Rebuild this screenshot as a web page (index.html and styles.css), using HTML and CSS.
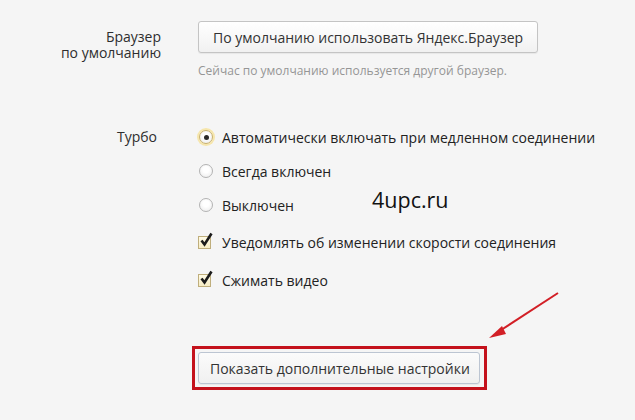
FILE: index.html
```html
<!DOCTYPE html>
<html lang="ru">
<head>
    <meta charset="UTF-8">
    <meta name="viewport" content="width=device-width, initial-scale=1.0">
    <title>Настройки</title>
    <link rel="stylesheet" href="styles.css">
</head>
<body>
    <div class="settings">
        <div class="row">
            <div class="label label-two">Браузер<br>по умолчанию</div>
            <div class="content">
                <button class="button">По умолчанию использовать Яндекс.Браузер</button>
                <div class="hint">Сейчас по умолчанию используется другой браузер.</div>
            </div>
        </div>

        <div class="row row-turbo">
            <div class="label label-turbo">Турбо</div>
            <div class="content">
                <div class="options">
                    <label class="option"><span class="radio checked"></span>Автоматически включать при медленном соединении</label>
                    <label class="option"><span class="radio"></span>Всегда включен</label>
                    <label class="option"><span class="radio"></span>Выключен</label>
                </div>
                <div class="checks">
                    <label class="option"><span class="check"><svg viewBox="0 0 16 16" width="16" height="16"><path d="M3.5 8.5 L6.5 12.5 L13.5 1.5" fill="none" stroke="#1b1b1b" stroke-width="2.6" stroke-linejoin="miter"/></svg></span>Уведомлять об изменении скорости соединения</label>
                    <label class="option"><span class="check"><svg viewBox="0 0 16 16" width="16" height="16"><path d="M3.5 8.5 L6.5 12.5 L13.5 1.5" fill="none" stroke="#1b1b1b" stroke-width="2.6" stroke-linejoin="miter"/></svg></span>Сжимать видео</label>
                </div>
            </div>
        </div>

        <div class="row row-more">
            <div class="label"></div>
            <div class="content">
                <div class="highlight">
                    <button class="button button-more">Показать дополнительные настройки</button>
                </div>
            </div>
        </div>
    </div>

    <div class="watermark">4upc.ru</div>

    <svg class="arrow" width="635" height="420" viewBox="0 0 635 420">
        <line x1="558" y1="293" x2="498" y2="332" stroke="#d21f26" stroke-width="2"/>
        <polygon points="489,338 502,326 506,334" fill="#d21f26"/>
    </svg>
</body>
</html>
```

FILE: styles.css
```css
body {
    margin: 0;
    background-color: #f5f5f5;
    font-family: "Open Sans", "Noto Sans", "Liberation Sans", sans-serif;
    font-size: 14px;
    color: #333;
    height: 420px;
    overflow: hidden;
}
.settings {
    padding-top: 21px;
}
.row {
    display: grid;
    grid-template-columns: 161px 1fr;
    column-gap: 37px;
}
.label {
    text-align: right;
    line-height: 16px;
    color: #2e2e2e;
}
.label-two {
    padding-top: 8px;
}
.button {
    height: 32px;
    padding: 0 14px;
    border: 1px solid #c4c4c4;
    border-radius: 3px;
    background: linear-gradient(#ffffff, #f1f1f1);
    font-family: inherit;
    font-size: 14px;
    color: #333;
    box-shadow: 0 1px 1px rgba(0, 0, 0, 0.06);
}
.hint {
    margin-top: 10px;
    font-size: 12px;
    line-height: 16px;
    color: #959595;
}

/* Турбо */
.row-turbo {
    margin-top: 48px;
}
.label-turbo {
    line-height: 20px;
    padding-right: 4px;
}
.options, .checks {
    display: flex;
    flex-direction: column;
}
.options {
    gap: 14px;
}
.checks {
    margin-top: 17px;
    gap: 18px;
}
.option {
    display: flex;
    align-items: center;
    height: 20px;
    color: #222;
}
.radio {
    width: 12px;
    height: 12px;
    margin: 0 9px 0 1px;
    border: 1px solid #b3b3b3;
    border-radius: 50%;
    background: radial-gradient(circle at 50% 40%, #ffffff 30%, #e9e9e9 100%);
    position: relative;
}
.radio.checked {
    border-color: #c9b06a;
    box-shadow: 0 0 0 2px #f6e6ac;
}
.radio.checked::after {
    content: "";
    position: absolute;
    left: 3.5px;
    top: 3.5px;
    width: 5px;
    height: 5px;
    border-radius: 50%;
    background-color: #2a2a2a;
}
.check {
    width: 11px;
    height: 11px;
    margin-right: 11px;
    border: 1px solid #bfae7c;
    background: linear-gradient(#fffbe6, #f6ecc4);
    position: relative;
}
.check svg {
    position: absolute;
    left: -1px;
    top: -5px;
}

/* Кнопка внизу */
.row-more {
    margin-top: 56px;
}
.highlight {
    display: inline-block;
    margin-left: -6px;
    padding: 3px 4px 3px 3px;
    border: 3px solid #c4121c;
}
.button-more {
    display: block;
    padding: 0 9px 0 11px;
    border-color: #bcc5d2;
    background: linear-gradient(#fbfbfb, #f0f0f0);
}

.watermark {
    position: absolute;
    left: 372px;
    top: 185px;
    font-size: 21.5px;
    color: #111;
}
.arrow {
    position: absolute;
    left: 0;
    top: 0;
    pointer-events: none;
}
```
